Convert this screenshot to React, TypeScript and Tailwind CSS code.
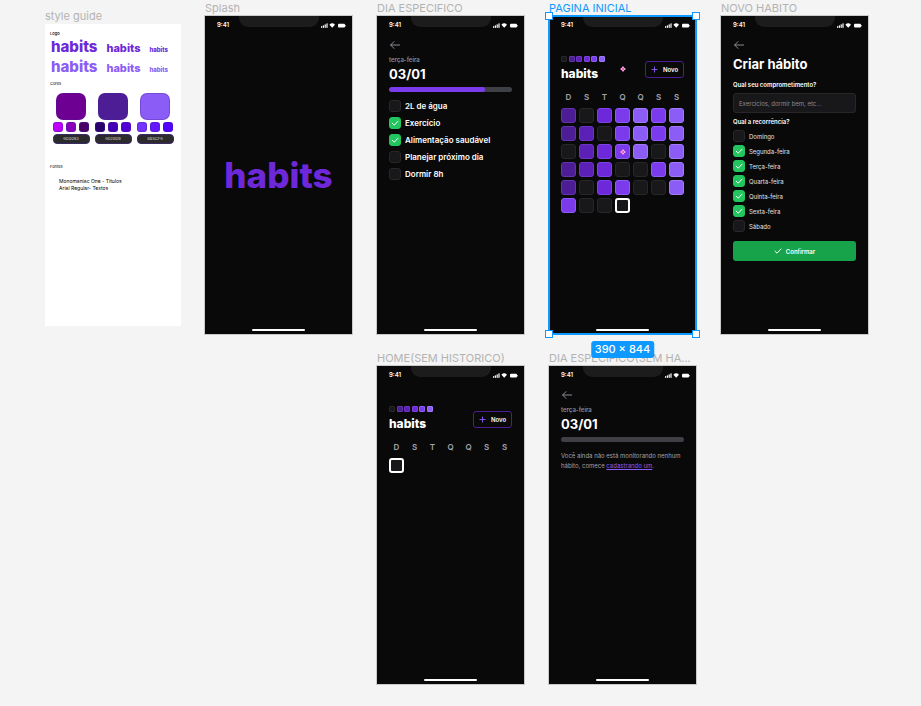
import type { ReactNode } from "react";

const LEVELS: Record<number, string> = {
  0: "border bg-[#18181b] border-[#27272a]",
  1: "border bg-[#4c1d95] border-[#6235a8]",
  2: "border bg-[#5b21b6] border-[#6d34c4]",
  3: "border bg-[#6d28d9] border-[#7d42e4]",
  4: "border bg-[#7c3aed] border-[#8b5cf6]",
  5: "border bg-[#8b5cf6] border-[#a07af8]",
  9: "border-2 bg-[#18181b] border-white",
};

const WEEKDAYS = ["D", "S", "T", "Q", "Q", "S", "S"];

const HISTORY = [
  1, 0, 3, 4, 5, 4, 5,
  1, 2, 0, 4, 5, 4, 5,
  0, 2, 3, 4, 5, 0, 5,
  1, 2, 3, 0, 0, 4, 5,
  1, 0, 3, 4, 0, 0, 5,
  4, 0, 0, 9,
];

const TASKS = [
  { label: "2L de água", done: false },
  { label: "Exercício", done: true },
  { label: "Alimentação saudável", done: true },
  { label: "Planejar próximo dia", done: false },
  { label: "Dormir 8h", done: false },
];

const RECURRENCE = [
  { label: "Domingo", done: false },
  { label: "Segunda-feira", done: true },
  { label: "Terça-feira", done: true },
  { label: "Quarta-feira", done: true },
  { label: "Quinta-feira", done: true },
  { label: "Sexta-feira", done: true },
  { label: "Sábado", done: false },
];

const PALETTES = [
  { name: "6D0093", main: "bg-[#6d0093]", shades: ["bg-[#bf00ff]", "bg-[#8b00bb]", "bg-[#4a0064]"] },
  { name: "6D28D9", main: "bg-[#4c1d95]", shades: ["bg-[#28006b]", "bg-[#4400b5]", "bg-[#5000d4]"] },
  { name: "8B5CF6", main: "bg-[#8b5cf6]", shades: ["bg-[#7433ff]", "bg-[#6419ff]", "bg-[#4f00ff]"] },
];

function StatusBar() {
  return (
    <div className="grid h-[22px] grid-cols-[1fr_80px_1fr] text-white">
      <span className="pl-3 pt-[5px] text-[6px] leading-[8px] font-semibold">9:41</span>
      <span className="h-[11px] rounded-b-[9px] bg-[#1c1c1d]" />
      <svg className="mt-[7px] ml-[2px] h-[5px] w-[26px]" viewBox="0 0 26 5" fill="currentColor" aria-hidden="true">
        <rect x="0" y="3.2" width="1.2" height="1.6" />
        <rect x="1.8" y="2.4" width="1.2" height="2.4" />
        <rect x="3.6" y="1.4" width="1.2" height="3.4" />
        <rect x="5.4" y="0.4" width="1.2" height="4.4" />
        <path d="M8.4 1.7a4 4 0 0 1 5.6 0l-2.8 3z" />
        <rect x="17" y="0.8" width="7" height="3.8" rx="1" />
        <rect x="24.4" y="2" width="0.6" height="1.4" />
      </svg>
    </div>
  );
}

function Frame({ title, selected = false, children }: { title: string; selected?: boolean; children: ReactNode }) {
  return (
    <section className="min-w-0">
      <h2
        className={`h-4 text-[11px] leading-4 whitespace-nowrap ${selected ? "text-[#0d99ff]" : "text-[#b3b3b3]"}`}
      >
        {title}
      </h2>
      <div className="relative w-[147px]">
        <div className="flex h-[318px] flex-col bg-[#09090a] outline outline-[#8a8a8a]/40">
          <StatusBar />
          <div className="flex flex-1 flex-col px-3">{children}</div>
          <div className="mx-auto mb-[3px] h-[2px] w-[53px] rounded-full bg-white" />
        </div>
        {selected && <Selection />}
      </div>
    </section>
  );
}

function Selection() {
  const handle = "absolute size-2 border border-[#0d99ff] bg-white";
  return (
    <div className="absolute -inset-px border-2 border-[#0d99ff]">
      <span className={`${handle} -top-[5px] -left-[5px]`} />
      <span className={`${handle} -top-[5px] -right-[5px]`} />
      <span className={`${handle} -bottom-[5px] -left-[5px]`} />
      <span className={`${handle} -right-[5px] -bottom-[5px]`} />
      <span className="absolute top-full left-1/2 mt-2 -translate-x-1/2 rounded-[3px] bg-[#0d99ff] px-1 text-[11px] leading-[17px] font-medium whitespace-nowrap text-white">
        390 × 844
      </span>
    </div>
  );
}

function BackButton() {
  return (
    <button type="button" aria-label="Voltar" className="mt-px flex h-3 items-center pl-px text-[#9a9aa2]">
      <svg className="h-2 w-[10px]" viewBox="0 0 10 8" fill="none" stroke="currentColor" strokeWidth="0.9" aria-hidden="true">
        <path d="M9.6 4H.8M4 .6.6 4 4 7.4" strokeLinecap="round" strokeLinejoin="round" />
      </svg>
    </button>
  );
}

function Check({ label, done, strong = false }: { label: string; done: boolean; strong?: boolean }) {
  return (
    <label className={`flex h-3 items-center gap-1 ${strong ? "text-[8px] font-semibold text-white" : "text-[6px] text-[#e4e4e7]"}`}>
      <span className="grid size-3 shrink-0">
        <input
          type="checkbox"
          defaultChecked={done}
          className="peer col-start-1 row-start-1 size-3 appearance-none rounded-[3px] border border-[#27272a] bg-[#18181b] checked:border-[#22c55e] checked:bg-[#22c55e]"
        />
        <svg
          className="pointer-events-none invisible col-start-1 row-start-1 size-3 text-white peer-checked:visible"
          viewBox="0 0 12 12"
          fill="none"
          stroke="currentColor"
          aria-hidden="true"
        >
          <path d="M3.2 6.2 5.2 8.2 9 4.2" strokeLinecap="round" strokeLinejoin="round" />
        </svg>
      </span>
      {label}
    </label>
  );
}

function Day({ progress }: { progress: string }) {
  return (
    <>
      <BackButton />
      <p className="mt-1 text-[6px] leading-[10px] font-semibold text-[#8b8b93]">terça-feira</p>
      <h3 className="text-[13px] leading-[18px] font-bold text-white">03/01</h3>
      <div className="mt-1 h-[5px] shrink-0 overflow-hidden rounded-full bg-[#3f3f46]">
        <div className={`h-full rounded-full bg-[#7c3aed] ${progress}`} />
      </div>
    </>
  );
}

function Spark() {
  return (
    <svg className="size-[6px]" viewBox="0 0 6 6" aria-hidden="true">
      <path d="M3 0 4.2 1.8 6 3 4.2 4.2 3 6 1.8 4.2 0 3 1.8 1.8z" fill="#ffb3e6" />
      <circle cx="3" cy="3" r="1" fill="#e83bb5" />
    </svg>
  );
}

function Home({ days, spark = false }: { days: number[]; spark?: boolean }) {
  return (
    <>
      <div className="mt-[18px] grid grid-cols-[1fr_auto_1fr] items-center">
        <div>
          <div className="flex w-[44px] justify-between">
            {[0, 1, 2, 3, 4, 5].map((level) => (
              <span key={level} className={`size-[6px] rounded-[1px] ${LEVELS[level]}`} />
            ))}
          </div>
          <h3 className="mt-1 text-[12px] leading-4 font-extrabold text-white">habits</h3>
        </div>
        {spark && <Spark />}
        <button
          type="button"
          className="col-start-3 flex h-[17px] w-[39px] items-center justify-center gap-[5px] justify-self-end rounded-[3px] border border-[#4c1d95] text-[6px] font-semibold text-white"
        >
          <svg className="size-[7px] text-[#8b5cf6]" viewBox="0 0 7 7" stroke="currentColor" strokeWidth="0.9" aria-hidden="true">
            <path d="M3.5.5v6M.5 3.5h6" />
          </svg>
          Novo
        </button>
      </div>
      <div className="mt-[9px] grid grid-cols-7 gap-x-[3px] text-center text-[8px] leading-[12px] font-semibold text-[#a1a1aa]">
        {WEEKDAYS.map((day, i) => (
          <span key={i}>{day}</span>
        ))}
      </div>
      <div className="mt-[5px] grid grid-cols-7 gap-[3px]">
        {days.map((level, i) => (
          <span key={i} className={`grid h-[15px] place-items-center rounded-[3px] ${LEVELS[level]}`}>
            {spark && i === 17 && <Spark />}
          </span>
        ))}
      </div>
    </>
  );
}

function LogoRow({ color }: { color: string }) {
  return (
    <div className={`flex items-baseline gap-[9px] pl-px font-extrabold ${color}`}>
      <span className="text-[15px] leading-[19px]">habits</span>
      <span className="text-[11px]">habits</span>
      <span className="text-[6px]">habits</span>
    </div>
  );
}

function StyleGuide() {
  const caption = "text-[4px] leading-[6px] text-black";
  return (
    <section className="pt-2">
      <h2 className="h-4 text-[11px] leading-4 text-[#b3b3b3]">style guide</h2>
      <div className="h-[302px] bg-white px-[5px] pt-[7px]">
        <h3 className={`${caption} font-medium`}>Logo</h3>
        <LogoRow color="text-[#6d28d9]" />
        <LogoRow color="text-[#8b5cf6]" />
        <h3 className={`${caption} mt-[5px]`}>Cores</h3>
        <div className="mt-[6px] flex justify-center gap-[5px]">
          {PALETTES.map((palette) => (
            <div key={palette.name} className="flex w-[37px] flex-col items-center">
              <span className={`h-[27px] w-[30px] rounded-[7px] border border-[#4c1d95]/30 ${palette.main}`} />
              <div className="mt-[2px] flex gap-[3px]">
                {palette.shades.map((shade) => (
                  <span key={shade} className={`size-[10px] rounded-[3px] border border-[#4c1d95]/40 ${shade}`} />
                ))}
              </div>
              <span className="mt-[2px] h-[10px] w-full rounded-[4px] border border-[#3b2a63] bg-[#2b2b2d] text-center text-[4px] leading-[8px] text-[#d4d4d8]">
                {palette.name}
              </span>
            </div>
          ))}
        </div>
        <h3 className={`${caption} mt-5`}>Fontes</h3>
        <div className="mt-2 pl-[9px] text-[5px] leading-[7px] text-black">
          <p>Monomaniac One - Titulos</p>
          <p>Arial Regular- Textos</p>
        </div>
      </div>
    </section>
  );
}

export default function App() {
  return (
    <main className="min-h-screen bg-[#f4f4f4] font-['Inter',sans-serif]">
      <div className="grid grid-cols-[136px_148px_148px_148px_148px] gap-x-6 gap-y-4 pl-[45px]">
        <StyleGuide />
        <Frame title="Splash">
          <div className="grid flex-1 place-items-center pb-4 text-[35px] font-extrabold text-[#6d28d9]">habits</div>
        </Frame>
        <Frame title="DIA ESPECIFICO">
          <Day progress="w-[78%]" />
          <div className="mt-2 flex flex-col gap-[5px]">
            {TASKS.map((task) => (
              <Check key={task.label} {...task} strong />
            ))}
          </div>
        </Frame>
        <Frame title="PAGINA INICIAL" selected>
          <Home days={HISTORY} spark />
        </Frame>
        <Frame title="NOVO HABITO">
          <BackButton />
          <h3 className="mt-1 text-[13px] leading-[18px] font-bold text-white">Criar hábito</h3>
          <label htmlFor="habit" className="mt-[7px] text-[6px] leading-[10px] font-semibold text-white">
            Qual seu comprometimento?
          </label>
          <input
            id="habit"
            type="text"
            placeholder="Exercícios, dormir bem, etc..."
            className="mt-[3px] h-5 w-full rounded-[3px] border border-[#27272a] bg-[#18181b] px-[5px] text-[6px] text-white placeholder:text-[#8a8a92]"
          />
          <fieldset className="mt-1">
            <legend className="text-[6px] leading-[10px] font-semibold text-white">Qual a recorrência?</legend>
            <div className="mt-[3px] flex flex-col gap-[3px]">
              {RECURRENCE.map((day) => (
                <Check key={day.label} {...day} />
              ))}
            </div>
          </fieldset>
          <button
            type="button"
            className="mt-[9px] flex h-5 w-full items-center justify-center gap-1 rounded-[3px] bg-[#16a34a] text-[6px] font-semibold text-white"
          >
            <svg className="h-[6px] w-2" viewBox="0 0 8 6" fill="none" stroke="currentColor" aria-hidden="true">
              <path d="M1 3.2 3 5.2 7 1" strokeLinecap="round" strokeLinejoin="round" />
            </svg>
            Confirmar
          </button>
        </Frame>
        <div className="col-start-3">
          <Frame title="HOME(SEM HISTORICO)">
            <Home days={[9]} />
          </Frame>
        </div>
        <Frame title="DIA ESPECIFICO(SEM HA...">
          <Day progress="w-0" />
          <p className="mt-[9px] text-[6px] leading-[10px] text-[#a1a1aa]">
            Você ainda não está monitorando nenhum hábito, comece{" "}
            <a href="#novo" className="text-[#8b5cf6] underline">
              cadastrando um
            </a>
            .
          </p>
        </Frame>
      </div>
    </main>
  );
}
